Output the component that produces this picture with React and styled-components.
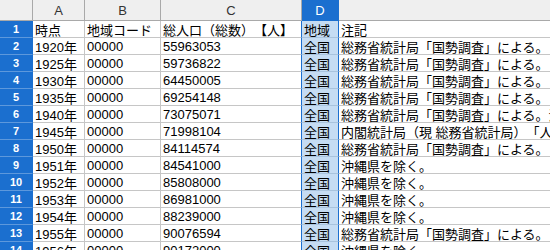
import React from 'react'
import styled, { createGlobalStyle } from 'styled-components'

const Global = createGlobalStyle`
  html, body {
    margin: 0;
    padding: 0;
    background: #fff;
    overflow: hidden;
  }
`

const Sheet = styled.div`
  display: grid;
  grid-template-columns: 33px 52px 76px 141px 37px 1fr;
  grid-auto-rows: 17px;
  grid-template-rows: 21px;
  width: 550px;
  height: 250px;
  overflow: hidden;
  font-family: "Liberation Sans", "Noto Sans CJK JP", sans-serif;
  font-size: 13px;
  color: #000;
  text-spacing-trim: space-all;
`

const Corner = styled.div`
  background: #efefef;
  border-right: 1px solid #a9a9a9;
  border-bottom: 1px solid #a9a9a9;
  box-sizing: border-box;
`

const ColHead = styled.div`
  display: flex;
  align-items: center;
  justify-content: center;
  box-sizing: border-box;
  background: ${p => (p.selected ? '#1b6fcf' : '#efefef')};
  color: ${p => (p.selected ? '#fff' : '#333')};
  border-right: 1px solid ${p => (p.selected ? '#1b6fcf' : '#a9a9a9')};
  border-bottom: 1px solid ${p => (p.selected ? '#1b6fcf' : '#a9a9a9')};
  font-size: 13px;
`

const RowHead = styled.div`
  display: flex;
  align-items: center;
  justify-content: center;
  box-sizing: border-box;
  background: #1b6fcf;
  color: #fff;
  font-weight: bold;
  font-size: 11px;
  border-right: 1px solid #1b6fcf;
  border-bottom: 1px solid #5d98dc;
`

const Cell = styled.div`
  display: flex;
  align-items: center;
  box-sizing: border-box;
  padding-left: 2px;
  white-space: nowrap;
  overflow: ${p => (p.spill ? 'visible' : 'hidden')};
  background: ${p => (p.selected ? '#c5dcf3' : '#fff')};
  border-right: 1px solid ${p => (p.selected ? '#1b6fcf' : p.spill ? 'transparent' : '#c6c6c6')};
  border-bottom: 1px solid ${p => (p.selected ? '#a8c3dd' : '#c6c6c6')};
  border-left: ${p => (p.selected ? '1px solid #1b6fcf' : 'none')};
  margin-left: ${p => (p.selected ? '-1px' : '0')};
`

const NOTE = '総務省統計局「国勢調査」による。'
const OKI = '沖縄県を除く。'

const rows = [
  ['時点', '地域コード', '総人口（総数）【人】', '地域', '注記'],
  ['1920年', '00000', '55963053', '全国', NOTE],
  ['1925年', '00000', '59736822', '全国', NOTE],
  ['1930年', '00000', '64450005', '全国', NOTE],
  ['1935年', '00000', '69254148', '全国', NOTE],
  ['1940年', '00000', '73075071', '全国', NOTE + '沖縄県を含む。'],
  ['1945年', '00000', '71998104', '全国', '内閣統計局（現 総務省統計局）「人口調査」による。'],
  ['1950年', '00000', '84114574', '全国', NOTE],
  ['1951年', '00000', '84541000', '全国', OKI],
  ['1952年', '00000', '85808000', '全国', OKI],
  ['1953年', '00000', '86981000', '全国', OKI],
  ['1954年', '00000', '88239000', '全国', OKI],
  ['1955年', '00000', '90076594', '全国', NOTE],
  ['1956年', '00000', '90172000', '全国', OKI],
]

export default function App() {
  return (
    <>
      <Global />
      <Sheet>
        <Corner />
        {['A', 'B', 'C', 'D', ''].map((c, i) => (
          <ColHead key={i} selected={c === 'D'}>{c}</ColHead>
        ))}
        {rows.map((r, i) => (
          <React.Fragment key={i}>
            <RowHead>{i + 1}</RowHead>
            {r.map((v, j) => (
              <Cell key={j} selected={j === 3} spill={j === 4}>{v}</Cell>
            ))}
          </React.Fragment>
        ))}
      </Sheet>
    </>
  )
}
